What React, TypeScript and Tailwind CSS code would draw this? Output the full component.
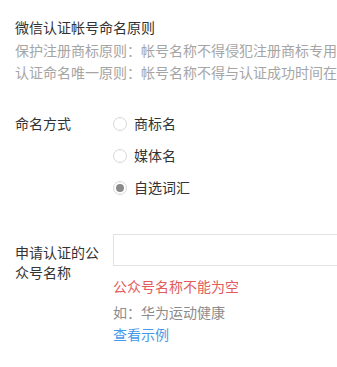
import React, { useState } from 'react'

const font = { fontFamily: '"Noto Sans CJK SC", "Microsoft YaHei", sans-serif' }

type Option = { id: string; label: string }

const options: Option[] = [
    { id: 'brand', label: '商标名' },
    { id: 'media', label: '媒体名' },
    { id: 'custom', label: '自选词汇' },
]

const Radio: React.FC<{ checked: boolean; label: string; onClick: () => void }> = ({ checked, label, onClick }) => (
    <button type="button" onClick={onClick} className="flex items-center h-[32px] text-left">
        <span className="flex items-center justify-center w-[14px] h-[14px] rounded-full border border-[#d6d6d6] bg-white">
            {checked && <span className="w-[8px] h-[8px] rounded-full bg-[#8a8a8a]" />}
        </span>
        <span className="ml-[7px] text-[14px] text-[#333]">{label}</span>
    </button>
)

const App: React.FC = () => {
    const [mode, setMode] = useState('custom')
    const [name, setName] = useState('')

    return (
        <div className="w-[337px] h-[367px] overflow-hidden bg-white pl-[15px] pt-[16px]" style={font}>
            <div className="text-[14px] leading-[22.5px]">
                <div className="text-[#333]">微信认证帐号命名原则</div>
                <div className="text-[#a5a5a5] whitespace-nowrap">保护注册商标原则：帐号名称不得侵犯注册商标专用</div>
                <div className="text-[#a5a5a5] whitespace-nowrap">认证命名唯一原则：帐号名称不得与认证成功时间在</div>
            </div>

            <div className="flex mt-[24px]">
                <div className="w-[98px] shrink-0 h-[32px] flex items-center text-[14px] text-[#333]">命名方式</div>
                <div className="flex flex-col">
                    {options.map((o) => (
                        <Radio key={o.id} label={o.label} checked={mode === o.id} onClick={() => setMode(o.id)} />
                    ))}
                </div>
            </div>

            <div className="flex mt-[30px]">
                <div className="w-[98px] shrink-0 pr-[10px] pt-[8px] text-[14px] leading-[20px] text-[#333]">
                    申请认证的公众号名称
                </div>
                <div className="flex flex-col">
                    <input
                        value={name}
                        onChange={(e) => setName(e.target.value)}
                        className="w-[260px] h-[32px] border border-[#e2e2e2] outline-none px-2 text-[14px]"
                    />
                    <div className="mt-[10px] text-[14px] leading-[20px] text-[#e35b5b]">公众号名称不能为空</div>
                    <div className="mt-[6px] text-[14px] leading-[20px] text-[#8c8c8c]">如：华为运动健康</div>
                    <a href="#" className="mt-[2px] text-[14px] leading-[20px] text-[#459ae9]">查看示例</a>
                </div>
            </div>
        </div>
    )
}

export default App
